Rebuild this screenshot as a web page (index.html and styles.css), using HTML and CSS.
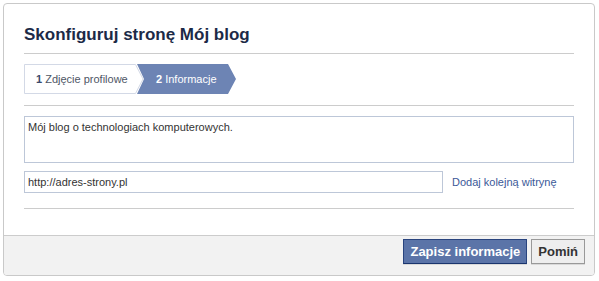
FILE: index.html
```html
<!DOCTYPE html>
<html lang="pl">
<head>
  <meta charset="UTF-8">
  <title>Skonfiguruj stronę Mój blog</title>
  <link rel="stylesheet" href="styles.css">
</head>
<body>
  <div class="dialog">
    <div class="dialog-body">
      <h2 class="title">Skonfiguruj stronę Mój blog</h2>

      <div class="steps">
        <div class="step step-done">
          <svg class="step-shape" viewBox="0 0 120 30" preserveAspectRatio="none">
            <polygon points="0.5,0.5 111.5,0.5 119,15 111.5,29.5 0.5,29.5" fill="#fff" stroke="#d3d9e6"/>
          </svg>
          <span class="step-label"><b>1</b> Zdjęcie profilowe</span>
        </div>
        <div class="step step-active">
          <svg class="step-shape" viewBox="0 0 99 30" preserveAspectRatio="none">
            <polygon points="0,0 91,0 99,15 91,30 0,30 7,15" fill="#6d84b4"/>
          </svg>
          <span class="step-label"><b>2</b> Informacje</span>
        </div>
      </div>

      <div class="fields">
        <textarea class="about">Mój blog o technologiach komputerowych.</textarea>
        <div class="site-row">
          <input class="site" type="text" value="http://adres-strony.pl">
          <a class="add-site" href="#">Dodaj kolejną witrynę</a>
        </div>
      </div>
    </div>

    <div class="dialog-footer">
      <button class="btn btn-primary">Zapisz informacje</button>
      <button class="btn">Pomiń</button>
    </div>
  </div>
</body>
</html>
```

FILE: styles.css
```css
body {
  margin: 0;
  background-color: #fff;
  font-family: "Liberation Sans", Arial, sans-serif;
  font-size: 11px;
  color: #333;
}
.dialog {
  margin: 3px 4px 5px 3px;
  border: 1px solid #c9c9c9;
  border-radius: 4px;
  overflow: hidden;
}
.dialog-body {
  padding: 0 20px;
}
.title {
  margin: 0;
  padding: 21px 0 8px;
  font-size: 17px;
  line-height: 20px;
  color: #1c2a47;
  border-bottom: 1px solid #ccc;
}
.steps {
  display: flex;
  padding: 10px 0 11px;
  border-bottom: 1px solid #ccc;
}
.step {
  position: relative;
  height: 30px;
  display: flex;
  align-items: center;
}
.step-shape {
  position: absolute;
  left: 0;
  top: 0;
  width: 100%;
  height: 100%;
}
.step-label {
  position: relative;
  white-space: nowrap;
}
.step-done {
  width: 120px;
  padding-left: 12px;
  box-sizing: border-box;
  color: #4e5665;
}
.step-done b {
  color: #3b4a6b;
}
.step-active {
  width: 99px;
  margin-left: -7px;
  padding-left: 19px;
  box-sizing: border-box;
  color: #fff;
}
.fields {
  padding: 10px 0 15px;
  border-bottom: 1px solid #ccc;
}
.about {
  display: block;
  width: 100%;
  height: 47px;
  box-sizing: border-box;
  margin: 0 0 8px;
  padding: 4px 3px;
  border: 1px solid #bdc7d8;
  font-family: inherit;
  font-size: 11px;
  color: #333;
  resize: none;
}
.site-row {
  display: flex;
  align-items: center;
}
.site {
  width: 419px;
  height: 22px;
  box-sizing: border-box;
  margin: 0;
  padding: 2px 3px;
  border: 1px solid #bdc7d8;
  font-family: inherit;
  font-size: 11px;
  color: #333;
}
.add-site {
  margin-left: 9px;
  color: #3b5998;
  text-decoration: none;
}
.dialog-footer {
  margin-top: 26px;
  display: flex;
  justify-content: flex-end;
  gap: 4px;
  padding: 3px 9px 11px;
  background-color: #f2f2f2;
  border-top: 1px solid #ccc;
}
.btn {
  height: 25px;
  padding: 0 6px;
  border: 1px solid #999;
  background-color: #eee;
  font-family: inherit;
  font-size: 13px;
  font-weight: bold;
  color: #333;
  box-shadow: 0 1px 0 rgba(0,0,0,0.1);
}
.btn-primary {
  background-color: #5b74a8;
  border-color: #29447e #29447e #1a356e;
  color: #fff;
}
```
